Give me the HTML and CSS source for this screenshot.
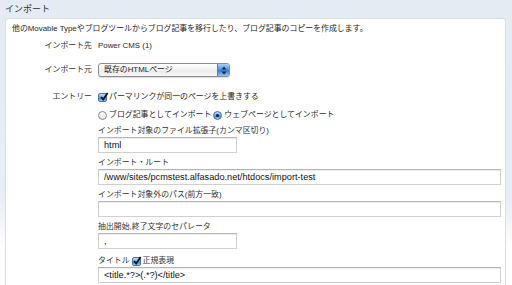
FILE: index.html
```html
<!DOCTYPE html>
<html lang="ja">
<head>
<meta charset="utf-8">
<link rel="stylesheet" href="styles.css">
</head>
<body>
<h1 class="title">インポート</h1>
<div class="panel">
  <p class="desc">他のMovable Typeやブログツールからブログ記事を移行したり、ブログ記事のコピーを作成します。</p>
  <div class="field f-dest">
    <div class="label">インポート先</div>
    <div class="content">Power CMS (1)</div>
  </div>
  <div class="field f-src">
    <div class="label">インポート元</div>
    <div class="content">
      <div class="select"><span class="sel-text">既存のHTMLページ</span><span class="sel-btn"><svg width="6" height="9" viewBox="0 0 6 9"><path d="M3 0.5 L5.5 3.5 H0.5 Z M3 8.5 L5.5 5.5 H0.5 Z" fill="#10243f"/></svg></span></div>
    </div>
  </div>
  <div class="field f-entry">
    <div class="label">エントリー</div>
    <div class="content">
      <div class="line"><span class="cb"><svg width="10" height="10" viewBox="0 0 10 10"><path d="M2 5 L4.2 7.5 L8.6 1" fill="none" stroke="#111" stroke-width="1.8"/></svg></span><span>パーマリンクが同一のページを上書きする</span></div>
      <div class="line radios"><span class="rb"></span><span>ブログ記事としてインポート</span><span class="rb on"></span><span>ウェブページとしてインポート</span></div>
      <div class="sub first">インポート対象のファイル拡張子(カンマ区切り)</div>
      <div class="input short">html</div>
      <div class="sub">インポート・ルート</div>
      <div class="input">/www/sites/pcmstest.alfasado.net/htdocs/import-test</div>
      <div class="sub">インポート対象外のパス(前方一致)</div>
      <div class="input"></div>
      <div class="sub">抽出開始,終了文字のセパレータ</div>
      <div class="input short">,</div>
      <div class="sub line tline"><span>タイトル</span><span class="cb"><svg width="10" height="10" viewBox="0 0 10 10"><path d="M2 5 L4.2 7.5 L8.6 1" fill="none" stroke="#111" stroke-width="1.8"/></svg></span><span>正規表現</span></div>
      <div class="input">&lt;title.*?&gt;(.*?)&lt;/title&gt;</div>
    </div>
  </div>
</div>
</body>
</html>
```
FILE: styles.css
```css
html, body {
  margin: 0;
  padding: 0;
}
body {
  width: 512px;
  height: 285px;
  overflow: hidden;
  background: linear-gradient(#e4ebf3 0px, #e8eef5 200px, #ffffff 250px);
  font-family: "Liberation Sans", "Noto Sans CJK JP", sans-serif;
  font-size: 7.9px;
  color: #262626;
}
.title {
  margin: 0;
  padding: 3px 0 0 5px;
  height: 15px;
  font-size: 9px;
  line-height: 12px;
  font-weight: normal;
  color: #2e2e2e;
}
.panel {
  margin-left: 5px;
  width: 501px;
  height: 267px;
  background: #fff;
  border: 1px solid #d7e0ea;
  border-bottom: none;
  border-radius: 4px 4px 0 0;
  box-sizing: border-box;
  padding-top: 5px;
  overflow: hidden;
}
.desc {
  margin: 0 0 0 6px;
  line-height: 10px;
  height: 10px;
  white-space: nowrap;
}
.field {
  display: flex;
  align-items: flex-start;
}
.label {
  width: 86px;
  text-align: right;
  color: #333;
  line-height: 10px;
  flex: none;
}
.content {
  margin-left: 6px;
  line-height: 10px;
  flex: 1;
}
.f-dest {
  margin-top: 7px;
}
.f-src {
  margin-top: 12px;
  align-items: center;
}
.f-entry {
  margin-top: 15px;
}
.select {
  width: 132px;
  height: 14px;
  box-sizing: border-box;
  border: 1px solid #8d8d8d;
  border-radius: 3px;
  background: linear-gradient(#ffffff, #ededed 60%, #f7f7f7);
  display: flex;
  align-items: center;
  justify-content: space-between;
  box-shadow: 0 1px 1px rgba(0,0,0,0.15);
  overflow: hidden;
}
.sel-text {
  padding-left: 5px;
  line-height: 12px;
}
.sel-btn {
  width: 11px;
  height: 12px;
  background: linear-gradient(#a9cff4, #4a92e0 50%, #2f7ad8 51%, #8cc4f6);
  border-left: 1px solid #5c7fa8;
  display: flex;
  align-items: center;
  justify-content: center;
}
.line {
  display: flex;
  align-items: center;
  height: 10px;
  white-space: nowrap;
}
.cb {
  width: 9px;
  height: 9px;
  box-sizing: border-box;
  border: 1px solid #4a6fa0;
  border-radius: 2px;
  background: linear-gradient(#c6e0fa, #5b9fe6 55%, #3a83d9 56%, #9ccbf5);
  position: relative;
  margin-right: 2px;
  flex: none;
}
.cb svg {
  position: absolute;
  left: -0.5px;
  top: -2px;
}
.radios {
  margin-top: 8px;
}
.rb {
  width: 9px;
  height: 9px;
  box-sizing: border-box;
  border: 1px solid #8a8a8a;
  border-radius: 50%;
  background: linear-gradient(#fdfdfd, #e3e3e3);
  margin-right: 2px;
  flex: none;
  position: relative;
}
.rb.on {
  border-color: #4a6fa0;
  background: linear-gradient(#c6e0fa, #5b9fe6 55%, #3a83d9 56%, #9ccbf5);
  margin-left: 2px;
}
.rb.on::after {
  content: "";
  position: absolute;
  left: 2px;
  top: 2px;
  width: 3px;
  height: 3px;
  border-radius: 50%;
  background: #0d1a2c;
}
.sub {
  margin-top: 5px;
  line-height: 10px;
  color: #333;
  white-space: nowrap;
}
.sub.first {
  margin-top: 6px;
}
.input {
  margin-top: 1px;
  height: 16px;
  box-sizing: border-box;
  width: 403px;
  border: 1px solid #d0d0d0;
  border-top-color: #b5b5b5;
  box-shadow: inset 0 1px 1px rgba(0,0,0,0.08);
  padding: 0 5px;
  line-height: 14px;
  font-size: 9.2px;
  color: #111;
  background: #fff;
  white-space: nowrap;
}
.input.short {
  width: 139px;
}
.tline {
  margin-top: 7px;
}
.tline .cb {
  margin-left: 2px;
}
```
